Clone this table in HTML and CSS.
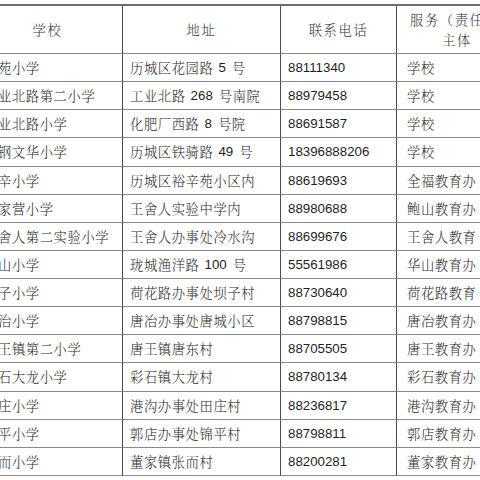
FILE: index.html
```html
<!DOCTYPE html>
<html lang="zh-CN">
<head>
<meta charset="utf-8">
<title>学校联系表</title>
<link rel="stylesheet" href="styles.css">
</head>
<body>
<div class="sheet">
  <div class="table">
    <div class="cell head">学校</div>
    <div class="cell head">地址</div>
    <div class="cell head">联系电话</div>
    <div class="cell head head-last"><span class="l1">服务（责任</span><span class="l2">主体</span></div>

    <div class="cell c1">苑小学</div><div class="cell c2">历城区花园路<span class="num gap">5</span>号</div><div class="cell c3 num">88111340</div><div class="cell c4">学校</div>
    <div class="cell c1">业北路第二小学</div><div class="cell c2">工业北路<span class="num gap">268</span>号南院</div><div class="cell c3 num">88979458</div><div class="cell c4">学校</div>
    <div class="cell c1">业北路小学</div><div class="cell c2">化肥厂西路<span class="num gap">8</span>号院</div><div class="cell c3 num">88691587</div><div class="cell c4">学校</div>
    <div class="cell c1">钢文华小学</div><div class="cell c2">历城区铁骑路<span class="num gap">49</span>号</div><div class="cell c3 num">18396888206</div><div class="cell c4">学校</div>
    <div class="cell c1">辛小学</div><div class="cell c2">历城区裕辛苑小区内</div><div class="cell c3 num">88619693</div><div class="cell c4">全福教育办</div>
    <div class="cell c1">家营小学</div><div class="cell c2">王舍人实验中学内</div><div class="cell c3 num">88980688</div><div class="cell c4">鲍山教育办</div>
    <div class="cell c1">舍人第二实验小学</div><div class="cell c2">王舍人办事处冷水沟</div><div class="cell c3 num">88699676</div><div class="cell c4">王舍人教育</div>
    <div class="cell c1">山小学</div><div class="cell c2">珑城渔洋路<span class="num gap">100</span>号</div><div class="cell c3 num">55561986</div><div class="cell c4">华山教育办</div>
    <div class="cell c1">子小学</div><div class="cell c2">荷花路办事处坝子村</div><div class="cell c3 num">88730640</div><div class="cell c4">荷花路教育</div>
    <div class="cell c1">治小学</div><div class="cell c2">唐冶办事处唐城小区</div><div class="cell c3 num">88798815</div><div class="cell c4">唐冶教育办</div>
    <div class="cell c1">王镇第二小学</div><div class="cell c2">唐王镇唐东村</div><div class="cell c3 num">88705505</div><div class="cell c4">唐王教育办</div>
    <div class="cell c1">石大龙小学</div><div class="cell c2">彩石镇大龙村</div><div class="cell c3 num">88780134</div><div class="cell c4">彩石教育办</div>
    <div class="cell c1">庄小学</div><div class="cell c2">港沟办事处田庄村</div><div class="cell c3 num">88236817</div><div class="cell c4">港沟教育办</div>
    <div class="cell c1">平小学</div><div class="cell c2">郭店办事处锦平村</div><div class="cell c3 num">88798811</div><div class="cell c4">郭店教育办</div>
    <div class="cell c1">而小学</div><div class="cell c2">董家镇张而村</div><div class="cell c3 num">88200281</div><div class="cell c4">董家教育办</div>
  </div>
</div>
</body>
</html>
```

FILE: styles.css
```css
html, body {
  margin: 0;
  padding: 0;
  background: #ffffff;
}

.sheet {
  width: 480px;
  height: 480px;
  overflow: hidden;
  background: #ffffff;
}

.table {
  display: grid;
  grid-template-columns: 150px 158px 116px 140px;
  grid-template-rows: 48px repeat(15, 28.13px);
  margin-left: -27px;
  margin-top: 4px;
  width: 564px;
  border-top: 2px solid #6d6d6d;
  font-family: "Noto Serif CJK SC", "Noto Sans CJK SC", serif;
  font-weight: 300;
  font-size: 13.3px;
  letter-spacing: 0.6px;
  color: #2e2e2e;
}

.cell {
  box-sizing: border-box;
  border-right: 1px solid #4a4a4a;
  border-bottom: 1px solid #8a8a8a;
  display: flex;
  align-items: center;
  white-space: nowrap;
  overflow: hidden;
  padding-left: 7px;
}

.head {
  justify-content: center;
  padding-left: 0;
  letter-spacing: 1.6px;
  color: #3a3a3a;
}

.head-last {
  flex-direction: column;
  align-items: flex-start;
  justify-content: center;
  padding-left: 13px;
  line-height: 20px;
}

.head-last .l2 {
  padding-left: 32px;
}

.c1 {
  padding-left: 25px;
}

.c4 {
  padding-left: 10px;
}

.num {
  font-family: "Liberation Sans", Arial, sans-serif;
  font-weight: 400;
  font-size: 13.3px;
  letter-spacing: 0;
  color: #1e1e1e;
}

.gap {
  margin: 0 6px 0 5px;
}
```
